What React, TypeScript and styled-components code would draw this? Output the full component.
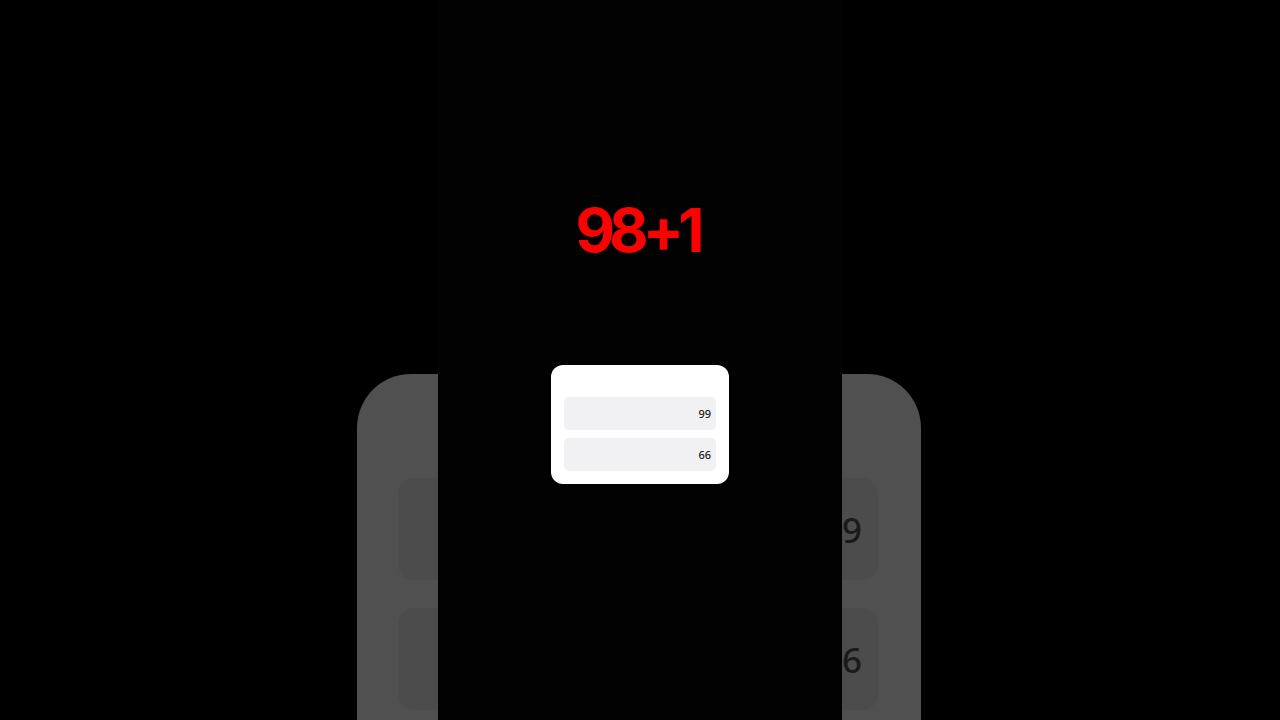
import styled, {createGlobalStyle} from "styled-components";

type Entry = {
    id: string;
    value: number;
}

const entries: Entry[] = [
    {id: 'a', value: 99},
    {id: 'b', value: 66},
];

const GlobalStyle = createGlobalStyle`
    html, body {
        margin: 0;
        padding: 0;
        background: #000000;
        font-family: "Noto Sans", "Open Sans", sans-serif;
    }

    #root {
        width: 1280px;
        height: 720px;
        overflow: hidden;
    }
`;

const ValueList = ({scale}: {scale: 'small' | 'large'}) => (
    <>
        {entries.map(entry => (
            <ValueRow key={entry.id} $size={scale}>{entry.value}</ValueRow>
        ))}
    </>
);

export default function App() {
    return (
        <>
            <GlobalStyle/>
            <Stage>
                <Backdrop>
                    <BackdropCard>
                        <ValueList scale='large'/>
                    </BackdropCard>
                </Backdrop>
                <Frame>
                    <Title>98+1</Title>
                    <Card>
                        <ValueList scale='small'/>
                    </Card>
                </Frame>
            </Stage>
        </>
    );
}

const Stage = styled.div`
    display: grid;
    width: 1280px;
    height: 720px;
    background: #000000;

    & > * {
        grid-area: 1 / 1;
    }
`;

const Backdrop = styled.div`
    display: flex;
    justify-content: center;
    padding-top: 374px;
    overflow: hidden;
`;

const BackdropCard = styled.div`
    width: 564px;
    height: 420px;
    box-sizing: border-box;
    padding: 104px 43px 0 41px;
    display: flex;
    flex-direction: column;
    gap: 28px;
    background: #505050;
    border-radius: 54px;
    margin-left: -2px;
`;

const Frame = styled.div`
    justify-self: center;
    width: 404px;
    height: 720px;
    background: #020203;
    display: flex;
    flex-direction: column;
    align-items: center;
    padding-top: 195px;
    box-sizing: border-box;
`;

const Title = styled.h1`
    margin: 0 0 0 -6px;
    color: #ff0000;
    font-family: Inter, "Noto Sans", sans-serif;
    font-weight: 700;
    font-size: 61px;
    line-height: 70px;
    letter-spacing: -6px;
`;

const Card = styled.div`
    margin-top: 100px;
    width: 178px;
    box-sizing: border-box;
    padding: 32px 13px 13px;
    display: flex;
    flex-direction: column;
    gap: 8px;
    background: #ffffff;
    border-radius: 12px;
`;

const ValueRow = styled.div<{$size: 'small' | 'large'}>`
    display: flex;
    align-items: center;
    justify-content: flex-end;
    height: ${p => p.$size === 'small' ? '33px' : '102px'};
    padding-right: ${p => p.$size === 'small' ? '5px' : '16px'};
    border-radius: ${p => p.$size === 'small' ? '5px' : '16px'};
    background: ${p => p.$size === 'small' ? '#f1f0f2' : '#4c4c4c'};
    color: ${p => p.$size === 'small' ? '#1c1c1c' : '#1a1a1a'};
    font-size: ${p => p.$size === 'small' ? '11px' : '35px'};
    font-weight: 500;
`;
